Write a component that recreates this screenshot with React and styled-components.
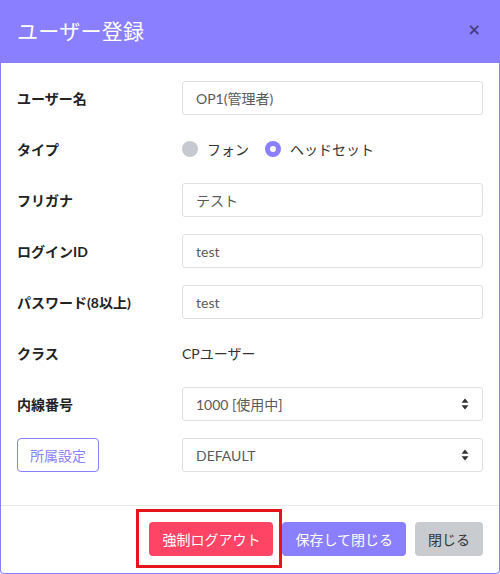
import React from "react";
import styled, { createGlobalStyle } from "styled-components";

const PURPLE = "#8a80ff";
const FONT = `"Lato", "Noto Sans CJK JP", sans-serif`;

const Global = createGlobalStyle`
  html, body { margin: 0; padding: 0; background: #fff; }
  body { font-family: ${FONT}; }
  * { box-sizing: border-box; }
`;

const Modal = styled.div`
  width: 500px;
  height: 574px;
  display: flex;
  flex-direction: column;
  border: 1px solid ${PURPLE};
  border-top: none;
  border-radius: 0 0 4px 4px;
  overflow: hidden;
  background: #fff;
`;

const Header = styled.div`
  height: 63px;
  margin: 0 -1px;
  background: ${PURPLE};
  display: flex;
  align-items: center;
  justify-content: space-between;
  padding: 0 19px 4px 17px;
`;

const Title = styled.h5`
  margin: 0;
  font-size: 21px;
  font-weight: 400;
  color: #fff;
  letter-spacing: 0.3px;
`;

const Close = styled.button`
  border: none;
  background: none;
  padding: 0;
  font-family: "DejaVu Sans", sans-serif;
  font-size: 16px;
  font-weight: 700;
  line-height: 1;
  color: #000;
  opacity: 0.5;
  cursor: pointer;
`;

const Body = styled.div`
  flex: 1;
  padding: 18px 16px 0 16px;
  display: flex;
  flex-direction: column;
  gap: 17px;
`;

const Row = styled.div`
  display: grid;
  grid-template-columns: 165px 1fr;
  align-items: center;
  height: 34px;
`;

const Label = styled.div`
  font-size: 14px;
  font-weight: 700;
  color: #222;
`;

const Input = styled.input`
  height: 34px;
  width: 100%;
  border: 1px solid #e0e0e0;
  border-radius: 3px;
  padding: 0 13px;
  font-family: ${FONT};
  font-size: 14px;
  color: #5a5a5a;
  outline: none;
  background: #fff;
`;

const Text = styled.div`
  font-size: 14px;
  color: #333;
`;

const Radios = styled.div`
  display: flex;
  align-items: center;
  gap: 16px;
`;

const RadioItem = styled.label`
  display: flex;
  align-items: center;
  gap: 9px;
  font-size: 14px;
  color: #333;
`;

const RadioDot = styled.span`
  width: 16px;
  height: 16px;
  border-radius: 50%;
  background: ${(p) => (p.$checked ? PURPLE : "#c6cad0")};
  display: flex;
  align-items: center;
  justify-content: center;
  &::after {
    content: "";
    width: 6px;
    height: 6px;
    border-radius: 50%;
    background: #fff;
    display: ${(p) => (p.$checked ? "block" : "none")};
  }
`;

const SelectBox = styled.div`
  height: 34px;
  border: 1px solid #e0e0e0;
  border-radius: 3px;
  padding: 0 13px;
  display: flex;
  align-items: center;
  justify-content: space-between;
  font-size: 14px;
  color: #5a5a5a;
`;

const OutlineButton = styled.button`
  justify-self: start;
  height: 34px;
  padding: 0 12px;
  border: 1px solid ${PURPLE};
  border-radius: 4px;
  background: #fff;
  color: ${PURPLE};
  font-family: ${FONT};
  font-size: 14px;
`;

const Footer = styled.div`
  border-top: 1px solid #e6e6e6;
  padding: 16px 16px 17px;
  display: flex;
  justify-content: flex-end;
  gap: 9px;
`;

const Highlight = styled.div`
  position: relative;
  display: flex;
  &::after {
    content: "";
    position: absolute;
    left: -13px;
    right: -9px;
    top: -13px;
    bottom: -12px;
    border: 3px solid #e8141b;
    pointer-events: none;
  }
`;

const variants = {
  danger: { bg: "#ff4466", fg: "#fff" },
  primary: { bg: PURPLE, fg: "#fff" },
  secondary: { bg: "#c8ccd1", fg: "#333" },
};

const Button = styled.button`
  height: 34px;
  padding: 0 13px;
  border: none;
  border-radius: 4px;
  background: ${(p) => variants[p.$variant].bg};
  color: ${(p) => variants[p.$variant].fg};
  font-family: ${FONT};
  font-size: 14px;
  cursor: pointer;
`;

const Arrows = () => (
  <svg width="8" height="12" viewBox="0 0 8 12">
    <path d="M4 0.5 L7.5 4.8 L0.5 4.8 Z" fill="#333" />
    <path d="M4 11.5 L7.5 7.2 L0.5 7.2 Z" fill="#333" />
  </svg>
);

export default function App() {
  return (
    <>
      <Global />
      <Modal>
        <Header>
          <Title>ユーザー登録</Title>
          <Close aria-label="close">×</Close>
        </Header>
        <Body>
          <Row>
            <Label>ユーザー名</Label>
            <Input defaultValue="OP1(管理者)" />
          </Row>
          <Row>
            <Label>タイプ</Label>
            <Radios>
              <RadioItem>
                <RadioDot />
                フォン
              </RadioItem>
              <RadioItem>
                <RadioDot $checked />
                ヘッドセット
              </RadioItem>
            </Radios>
          </Row>
          <Row>
            <Label>フリガナ</Label>
            <Input defaultValue="テスト" />
          </Row>
          <Row>
            <Label>ログインID</Label>
            <Input defaultValue="test" />
          </Row>
          <Row>
            <Label>パスワード(8以上)</Label>
            <Input defaultValue="test" />
          </Row>
          <Row>
            <Label>クラス</Label>
            <Text>CPユーザー</Text>
          </Row>
          <Row>
            <Label>内線番号</Label>
            <SelectBox>
              <span>1000 [使用中]</span>
              <Arrows />
            </SelectBox>
          </Row>
          <Row>
            <OutlineButton>所属設定</OutlineButton>
            <SelectBox>
              <span>DEFAULT</span>
              <Arrows />
            </SelectBox>
          </Row>
        </Body>
        <Footer>
          <Highlight>
            <Button $variant="danger">強制ログアウト</Button>
          </Highlight>
          <Button $variant="primary">保存して閉じる</Button>
          <Button $variant="secondary">閉じる</Button>
        </Footer>
      </Modal>
    </>
  );
}
